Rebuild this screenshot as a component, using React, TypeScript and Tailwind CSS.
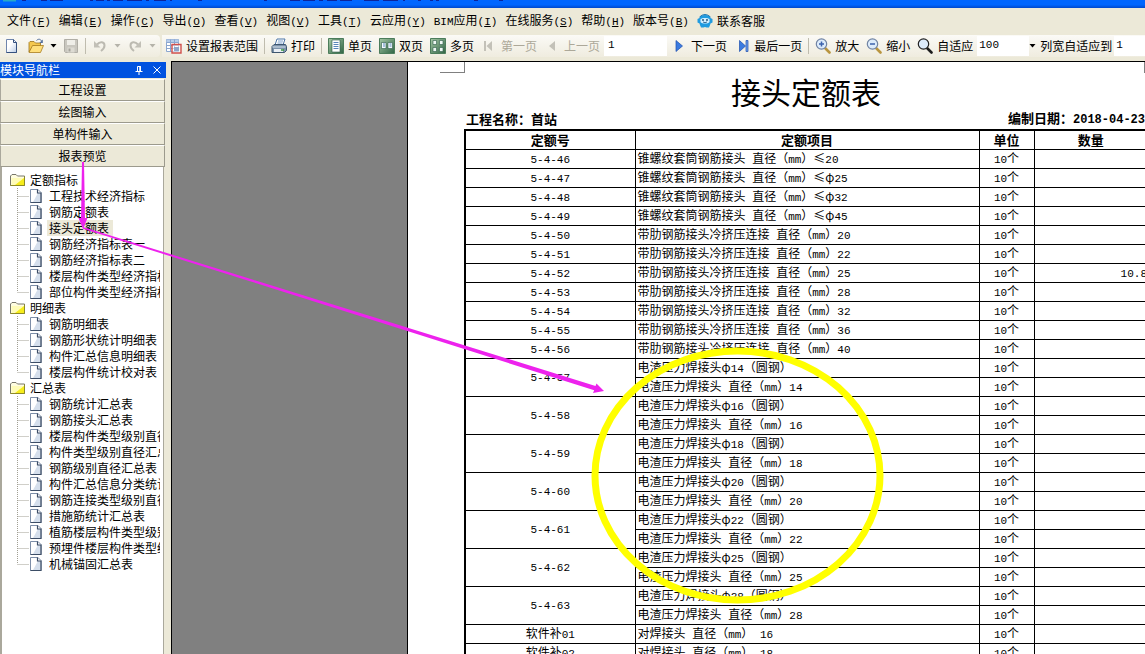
import type { ReactNode } from 'react'
import clsx from 'clsx'

// latin runs are set in a narrower mono face than the Chinese around them
function Txt({ children, bold }: { children: string; bold?: boolean }) {
  return (
    <>
      {children.split(/([\x20-\x7e]+)/).map((part, i) =>
        i % 2 ? (
          <span key={i} className={clsx("font-['Liberation_Mono',monospace]", bold ? 'text-[12px]' : 'text-[11px]')}>
            {part}
          </span>
        ) : (
          part
        ),
      )}
    </>
  )
}

const menus: [string, string][] = [
  ['文件', 'F'], ['编辑', 'E'], ['操作', 'C'], ['导出', 'O'], ['查看', 'V'], ['视图', 'V'], ['工具', 'T'],
  ['云应用', 'Y'], ['BIM应用', 'I'], ['在线服务', 'S'], ['帮助', 'H'], ['版本号', 'B'],
]

const modules = ['工程设置', '绘图输入', '单构件输入', '报表预览']

const tree = [
  {
    name: '定额指标',
    items: ['工程技术经济指标', '钢筋定额表', '接头定额表', '钢筋经济指标表一', '钢筋经济指标表二', '楼层构件类型经济指标表', '部位构件类型经济指标表'],
  },
  { name: '明细表', items: ['钢筋明细表', '钢筋形状统计明细表', '构件汇总信息明细表', '楼层构件统计校对表'] },
  {
    name: '汇总表',
    items: [
      '钢筋统计汇总表', '钢筋接头汇总表', '楼层构件类型级别直径汇总表', '构件类型级别直径汇总表', '钢筋级别直径汇总表',
      '构件汇总信息分类统计表', '钢筋连接类型级别直径汇总表', '措施筋统计汇总表', '植筋楼层构件类型级别直径汇总表',
      '预埋件楼层构件类型统计表', '机械锚固汇总表',
    ],
  },
]

type Quota = { code: string; items: string[]; amount?: string }

const quotas: Quota[] = [
  { code: '5-4-46', items: ['锥螺纹套筒钢筋接头 直径（mm）≤20'] },
  { code: '5-4-47', items: ['锥螺纹套筒钢筋接头 直径（mm）≤φ25'] },
  { code: '5-4-48', items: ['锥螺纹套筒钢筋接头 直径（mm）≤φ32'] },
  { code: '5-4-49', items: ['锥螺纹套筒钢筋接头 直径（mm）≤φ45'] },
  { code: '5-4-50', items: ['带肋钢筋接头冷挤压连接 直径（mm）20'] },
  { code: '5-4-51', items: ['带肋钢筋接头冷挤压连接 直径（mm）22'] },
  { code: '5-4-52', items: ['带肋钢筋接头冷挤压连接 直径（mm）25'], amount: '10.8' },
  { code: '5-4-53', items: ['带肋钢筋接头冷挤压连接 直径（mm）28'] },
  { code: '5-4-54', items: ['带肋钢筋接头冷挤压连接 直径（mm）32'] },
  { code: '5-4-55', items: ['带肋钢筋接头冷挤压连接 直径（mm）36'] },
  { code: '5-4-56', items: ['带肋钢筋接头冷挤压连接 直径（mm）40'] },
  { code: '5-4-57', items: ['电渣压力焊接头φ14（圆钢）', '电渣压力焊接头 直径（mm）14'] },
  { code: '5-4-58', items: ['电渣压力焊接头φ16（圆钢）', '电渣压力焊接头 直径（mm）16'] },
  { code: '5-4-59', items: ['电渣压力焊接头φ18（圆钢）', '电渣压力焊接头 直径（mm）18'] },
  { code: '5-4-60', items: ['电渣压力焊接头φ20（圆钢）', '电渣压力焊接头 直径（mm）20'] },
  { code: '5-4-61', items: ['电渣压力焊接头φ22（圆钢）', '电渣压力焊接头 直径（mm）22'] },
  { code: '5-4-62', items: ['电渣压力焊接头φ25（圆钢）', '电渣压力焊接头 直径（mm）25'] },
  { code: '5-4-63', items: ['电渣压力焊接头φ28（圆钢）', '电渣压力焊接头 直径（mm）28'] },
  { code: '软件补01', items: ['对焊接头 直径（mm） 16'] },
  { code: '软件补02', items: ['对焊接头 直径（mm） 18'] },
]

function Icon({ children }: { children: ReactNode }) {
  return (
    <svg viewBox="0 0 16 16" className="w-4 h-4 shrink-0" aria-hidden="true">
      {children}
    </svg>
  )
}

const NewIcon = () => (
  <Icon>
    <defs>
      <linearGradient id="sheet" x1="0" y1="0" x2="1" y2="1">
        <stop offset="0.4" stopColor="#fff" />
        <stop offset="1" stopColor="#b9cbe6" />
      </linearGradient>
    </defs>
    <path d="M2.500 1.500h7l3 3v10h-10z" fill="url(#sheet)" stroke="#6f85ad" />
    <path d="M9.500 1.500v3h3M12.500 4.500v10h-10" fill="none" stroke="#34507f" />
  </Icon>
)

const OpenIcon = () => (
  <Icon>
    <path d="M1 14V4.500L2 3.500h4l1.500 1.500h5V8H5z" fill="#f5c84e" stroke="#9a7420" strokeWidth=".8" />
    <path d="M1 14.500L4.500 7.500H15.500L12.500 14.500z" fill="#ffdf7b" stroke="#a87c1e" strokeWidth=".8" />
    <path d="M8.500 2.500c2-2 4-1.500 5 .5" fill="none" stroke="#54709c" />
    <path d="M14.800 1.500v3.500h-3.500z" fill="#54709c" />
  </Icon>
)

const SaveIcon = () => (
  <Icon>
    <path d="M1.500 1.500h13v13h-12l-1-1z" fill="#c9c7bf" stroke="#b0aea6" />
    <path d="M4 2h8v5H4z" fill="#efeee8" />
    <path d="M4.500 9.500h7v5h-7z" fill="#dddbd3" />
    <path d="M5.500 10.500h2v3h-2z" fill="#a5a39b" />
  </Icon>
)

const UndoIcon = ({ flip }: { flip?: boolean }) => (
  <Icon>
    <g transform={flip ? 'translate(16 0) scale(-1 1)' : undefined}>
      <path d="M5 6.500C8 3 12.500 3.500 12.500 7.500c0 2.500-1.500 4-3.500 5.500" fill="none" stroke="#bcbab1" strokeWidth="2" />
      <path d="M2 3v6.500h6.500z" fill="#c2c0b7" />
    </g>
  </Icon>
)

const RangeIcon = () => (
  <Icon>
    <path d="M.5 1.500h12v12H.5z" fill="#fff" stroke="#8ba6cf" />
    <path d="M.5 1.500h12v3H.5z" fill="#b7cdea" />
    <path d="M.5 4.500h12M.5 7.500h12M.5 10.500h12M4.500 1.500v12M8.500 1.500v12" stroke="#8ba6cf" />
    <path d="M6 6.500h9v8.500H6z" fill="#fff" fillOpacity=".5" stroke="#d0504c" strokeWidth="1.400" />
    <path d="M8 9h5v4H8z" fill="#8ea5c9" />
  </Icon>
)

const PrintIcon = () => (
  <Icon>
    <path d="M4 7l2-6h8l-2 6z" fill="#fff" stroke="#4d76a8" />
    <path d="M7 3h5M6.500 5h5" stroke="#7da0cc" />
    <path d="M1 8.500L3 6.500h11.500l1 2v4l-2 2H1z" fill="#7d93ab" stroke="#3e566f" />
    <path d="M1.500 9h13" stroke="#dce6f0" />
    <path d="M3 11h9v3H3z" fill="#e9eef4" />
    <path d="M10 12h3" stroke="#3a9a3a" strokeWidth="1.500" />
  </Icon>
)

const GreenBox = ({ children }: { children: ReactNode }) => (
  <Icon>
    <defs>
      <linearGradient id="green" x1="0" y1="0" x2="1" y2="1">
        <stop offset="0" stopColor="#a5c8a6" />
        <stop offset="1" stopColor="#2f6444" />
      </linearGradient>
    </defs>
    <path d="M.5.5h15v15H.5z" fill="url(#green)" stroke="#4c7d5b" />
    {children}
  </Icon>
)

const SinglePageIcon = () => (
  <GreenBox>
    <path d="M4 2h8v12H4z" fill="#fff" stroke="#2e5d48" strokeWidth=".6" />
    <path d="M5.500 4.500h5M5.500 6.500h5M5.500 8.500h5M5.500 10.500h5" stroke="#5a86bb" />
  </GreenBox>
)

const DoublePageIcon = () => (
  <GreenBox>
    <path d="M2.500 4.500h4.500v6H2.500zM9 4.500h4.500v6H9z" fill="#f4faff" stroke="#2e5d48" strokeWidth=".6" />
    <path d="M4 6h2M4 8h2M10.500 6h2M10.500 8h2" stroke="#5a86bb" />
  </GreenBox>
)

const MultiPageIcon = () => (
  <GreenBox>
    <path d="M3 2.500h3.500v4H3zM9.500 2.500H13v4H9.500zM3 9.500h3.500v4H3zM9.500 9.500H13v4H9.500z" fill="#eef8f4" stroke="#2e5d48" strokeWidth=".6" />
  </GreenBox>
)

const FirstIcon = () => (
  <Icon>
    <path d="M3 3h2v10H3zM11 3v10L5.500 8z" fill="#c3c1b8" />
  </Icon>
)

const PrevIcon = () => (
  <Icon>
    <path d="M11 3v10L5 8z" fill="#c3c1b8" />
  </Icon>
)

const NextIcon = () => (
  <Icon>
    <path d="M5 2.500v11L11.500 8z" fill="#3b7be0" stroke="#1d4fae" strokeWidth=".7" />
  </Icon>
)

const LastIcon = () => (
  <Icon>
    <path d="M5.500 2.500v11L11.500 8z" fill="#3b7be0" stroke="#1d4fae" strokeWidth=".7" />
    <path d="M12 2.500h2v11h-2z" fill="#6fa0ee" stroke="#1d4fae" strokeWidth=".7" />
  </Icon>
)

const Lens = ({ dark, children }: { dark?: boolean; children?: ReactNode }) => (
  <Icon>
    <path d="M10 10l4.500 4.500" stroke={dark ? '#1c1c1c' : '#b9953f'} strokeWidth="2.600" strokeLinecap="round" />
    <circle cx="6.500" cy="6" r="5.200" fill="#dcebfb" stroke={dark ? '#222' : '#7184a3'} strokeWidth="1.200" />
    {children}
  </Icon>
)

const ServiceIcon = () => (
  <Icon>
    <path d="M2.500 5C3 1 13 1 13.500 5l2 1v3.500L13.500 10.500c-.5 2-1 2.500-1.500 4H9.500L8 14l-1.500.5H4c-.5-1.500-1-2-1.500-4L.5 9.500V6z" fill="#1f9be0" />
    <path d="M3.500 6c1.500-1.500 7.500-1.500 9 0v3c-1.500 2-7.500 2-9 0z" fill="#d3efff" />
    <circle cx="6" cy="7" r=".9" fill="#124b78" />
    <circle cx="10" cy="7" r=".9" fill="#124b78" />
    <path d="M6 9q2 1.300 4 0" fill="none" stroke="#124b78" strokeWidth=".8" />
    <path d="M2.500 4Q8-1 13.500 4" fill="none" stroke="#1673b5" />
  </Icon>
)

const FolderIcon = () => (
  <Icon>
    <path d="M.5 13.500V4l1.500-1.500h4L7.500 4h7v9.500z" fill="#fffde0" stroke="#77766a" />
    <path d="M1.500 13V6h12.500v7z" fill="#fffcb8" />
    <path d="M5 13l9-7v7z" fill="#f6ec1c" />
    <path d="M.5 13.500h14V4.500" fill="none" stroke="#8f8a26" />
  </Icon>
)

const FileIcon = () => (
  <svg viewBox="0 0 12 16" className="w-3 h-4 shrink-0" aria-hidden="true">
    <path d="M.5 1.500h7.500l3 3v10H.5z" fill="#fff" stroke="#7d8ea8" />
    <path d="M8 5h2.500v9H3z" fill="#d5dfec" />
    <path d="M7.500 1.500v3.500H11v9.500H.5" fill="none" stroke="#3c4d66" strokeWidth="1.200" />
  </svg>
)

function Caret({ disabled }: { disabled?: boolean }) {
  return (
    <svg viewBox="0 0 7 4" className="w-[7px] h-1 shrink-0" aria-hidden="true">
      <path d="M.5 0h6l-3 3.500z" fill={disabled ? '#b5b3aa' : '#000'} />
    </svg>
  )
}

function Tool({ icon, label, disabled }: { icon: ReactNode; label: string; disabled?: boolean }) {
  return (
    <button type="button" disabled={disabled} className="flex items-center gap-1 shrink-0 disabled:text-[#aca899]">
      {icon}
      {label}
    </button>
  )
}

const Sep = () => <div className="w-px h-4 mx-1.5 shrink-0 bg-[#bfbcae]" />

function TitleBar() {
  return (
    <header className="h-2 shrink-0 bg-gradient-to-b from-[#0066ff] from-60% to-[#0048cc]">
      <svg className="block h-2 w-[520px]" aria-hidden="true">
        <path d="M3 0h13v1.500H3z" fill="#27a9c9" />
        <path
          d="M22 .5h4M41 .5h6M50 .5h13M90 .5h3M96 .5h8M107 .5h3M113 .5h10M127 .5h15M146 .5h3M154 .5h12M170 .5h2M198 .5h4M264 .5h3M290 .5h10M303 .5h12M319 .5h4M327 .5h10M340 .5h12M364 .5h15M383 .5h15M403 .5h2M418 .5h3M430 .5h3M436 .5h3M474 .5h4M499 .5h4"
          stroke="#0b249c"
          strokeWidth="1"
        />
      </svg>
    </header>
  )
}

function MenuBar() {
  return (
    <nav className="flex items-center gap-2 h-[27px] pl-[7px] pb-0.5 shrink-0 whitespace-nowrap">
      {menus.map(([name, key]) => (
        <button type="button" key={name}>
          <Txt>{name}</Txt>
          <span className="font-['Liberation_Mono',monospace] text-[11px]">
            (<u>{key}</u>)
          </span>
        </button>
      ))}
      <Tool icon={<ServiceIcon />} label="联系客服" />
    </nav>
  )
}

function Toolbar() {
  return (
    <div className="flex h-[22px] shrink-0 gap-0.5 whitespace-nowrap">
      <div className="flex items-center w-40 shrink-0 pl-1 rounded-r-sm bg-gradient-to-b from-[#fbfaf6] to-[#efecdf]">
        <button type="button" aria-label="新建"><NewIcon /></button>
        <button type="button" aria-label="打开" className="flex items-center gap-1.5 ml-2"><OpenIcon /><Caret /></button>
        <button type="button" aria-label="保存" disabled className="ml-1.5"><SaveIcon /></button>
        <Sep />
        <button type="button" aria-label="撤销" disabled className="flex items-center gap-1.5"><UndoIcon /><Caret disabled /></button>
        <button type="button" aria-label="恢复" disabled className="flex items-center gap-1.5 ml-1.5"><UndoIcon flip /><Caret disabled /></button>
      </div>

      <div className="flex items-center flex-1 min-w-0 pl-1 bg-gradient-to-b from-[#fbfaf6] to-[#efecdf]">
        <Tool icon={<RangeIcon />} label="设置报表范围" />
        <Sep />
        <Tool icon={<PrintIcon />} label="打印" />
        <Sep />
        <div className="flex items-center gap-[7px] shrink-0">
          <Tool icon={<SinglePageIcon />} label="单页" />
          <Tool icon={<DoublePageIcon />} label="双页" />
          <Tool icon={<MultiPageIcon />} label="多页" />
          <Tool icon={<FirstIcon />} label="第一页" disabled />
          <div className="flex items-center gap-1">
            <Tool icon={<PrevIcon />} label="上一页" disabled />
            <input
              aria-label="页码"
              defaultValue="1"
              className="w-[63px] h-5 px-1 pb-0.5 bg-white font-['Liberation_Mono',monospace] text-[11px]"
            />
            <Tool icon={<NextIcon />} label="下一页" />
          </div>
          <Tool icon={<LastIcon />} label="最后一页" />
        </div>
        <Sep />
        <div className="flex items-center gap-[7px] shrink-0">
          <Tool icon={<Lens><path d="M4 6h5M6.500 3.500v5" stroke="#3b62ad" strokeWidth="1.500" /></Lens>} label="放大" />
          <Tool icon={<Lens><path d="M4 6h5" stroke="#3b62ad" strokeWidth="1.500" /></Lens>} label="缩小" />
          <Tool icon={<Lens dark />} label="自适应" />
        </div>
        <div className="flex items-center ml-1 mr-1 shrink-0">
          <select
            aria-label="显示比例"
            className="appearance-none w-[52px] h-5 pl-0.5 pb-0.5 bg-white font-['Liberation_Mono',monospace] text-[11px]"
          >
            <option>100</option>
          </select>
          <Caret />
        </div>
        <label htmlFor="fit-columns" className="shrink-0">列宽自适应到</label>
        <input
          id="fit-columns"
          defaultValue="1"
          className="flex-1 min-w-0 h-5 ml-0.5 px-0.5 pb-0.5 bg-white font-['Liberation_Mono',monospace] text-[11px]"
        />
      </div>
    </div>
  )
}

function Sidebar() {
  return (
    <aside className="flex flex-col w-[166px] shrink-0 whitespace-nowrap">
      <div className="flex items-center h-4 mt-px bg-[#0052e0] text-white">
        <h2 className="flex-1">模块导航栏</h2>
        <button type="button" aria-label="固定" className="mr-2">
          <svg viewBox="0 0 10 10" className="w-2.5 h-2.5" aria-hidden="true">
            <path d="M3.500 6V1.500h3V6M1.500 6.500h7M5 6.500V10" fill="none" stroke="#fff" />
            <path d="M6 1v5" stroke="#fff" strokeWidth="1.500" />
          </svg>
        </button>
        <button type="button" aria-label="关闭" className="mr-1">
          <svg viewBox="0 0 10 10" className="w-2.5 h-2.5" aria-hidden="true">
            <path d="M1.500 1.500l7 7M8.500 1.500l-7 7" stroke="#fff" />
          </svg>
        </button>
      </div>

      <div className="flex flex-col pt-px pr-px">
        {modules.map((name) => (
          <button
            type="button"
            key={name}
            className="h-[22px] border-t border-l border-b border-r border-t-white border-l-[#aaa89c] border-b-[#9c9a8d] border-r-[#9c9a8d]"
          >
            {name}
          </button>
        ))}
      </div>

      <div className="flex-1 min-h-0 overflow-hidden mr-0.5 pt-[5px] pl-2 pr-[3px] bg-white border-l-2 border-r border-[#aaa89c]">
        {tree.map((group) => (
          <section key={group.name}>
            <button type="button" className="flex items-center gap-1 h-4">
              <FolderIcon />
              {group.name}
            </button>
            <ul>
              {group.items.map((item, i) => (
                <li key={item} className="flex items-center h-4 pl-[7px] overflow-hidden">
                  <svg viewBox="0 0 13 16" className="w-[13px] h-4 shrink-0" aria-hidden="true">
                    <path
                      d={i === group.items.length - 1 ? 'M.5 0v8M.5 8.500h11' : 'M.5 0v16M.5 8.500h11'}
                      fill="none"
                      stroke="#a09e92"
                      strokeDasharray="1 1"
                    />
                  </svg>
                  <FileIcon />
                  <button
                    type="button"
                    className={clsx('h-4 ml-[5px] pl-0.5 pr-1 leading-4', item === '接头定额表' && 'bg-[#ece9d8]')}
                  >
                    {item}
                  </button>
                </li>
              ))}
            </ul>
          </section>
        ))}
      </div>
    </aside>
  )
}

function Report() {
  return (
    <article className="w-[800px] shrink-0 bg-white border-l border-black">
      <div className="flex h-[11px]">
        <div className="w-[25px] ml-8 border-b border-r border-[#808080]" />
        <div className="w-[25px] ml-[679px] border-b border-l border-[#808080]" />
      </div>
      <div className="w-[684px] ml-14">
        <h1 className="text-[30px] leading-9 text-center">接头定额表</h1>
        <div className="flex items-center justify-between h-5 pl-0.5 pr-[3px] font-bold text-[13px]">
          <span>工程名称：首站</span>
          <span><Txt bold>编制日期：2018-04-23</Txt></span>
        </div>
        <table className="w-full table-fixed border-collapse border-t-2 border-l-2 border-black leading-4">
          <colgroup>
            <col className="w-[170px]" />
            <col className="w-[344px]" />
            <col className="w-[55px]" />
            <col />
          </colgroup>
          <thead>
            <tr className="text-[13px]">
              {['定额号', '定额项目', '单位', '数量'].map((h) => (
                <th key={h} className="h-[19px] p-0 border border-black border-t-2">{h}</th>
              ))}
            </tr>
          </thead>
          <tbody>
            {quotas.flatMap(({ code, items, amount }) =>
              items.map((item, i) => (
                <tr key={item} className="h-[19px] text-center">
                  {i === 0 && (
                    <td rowSpan={items.length} className="p-0 border border-black"><Txt>{code}</Txt></td>
                  )}
                  <td className="p-0 pl-0.5 border border-black text-left"><Txt>{item}</Txt></td>
                  <td className="p-0 border border-black"><Txt>10个</Txt></td>
                  <td className="p-0 border border-black text-right">{amount && <Txt>{amount}</Txt>}</td>
                </tr>
              )),
            )}
          </tbody>
        </table>
      </div>
    </article>
  )
}

// freehand marks laid over the window
function Annotations() {
  return (
    <svg className="absolute top-0 left-0 w-[1145px] h-[654px] pointer-events-none" aria-hidden="true">
      <ellipse cx="737.500" cy="475.500" rx="142.500" ry="124.500" fill="none" stroke="#ffff00" strokeWidth="7" />
      <g fill="#ed22ed">
        <path d="M82 162h2l1 56h2.500l-4.500 11-4.500-11h2.500z" />
        <path d="M83 227L250 278.800 595.500 386l1-2.500 7.500 7.500-11 2 1.200-2.800L250 281.200 83 228.800z" />
      </g>
    </svg>
  )
}

export default function App() {
  return (
    <div className="relative flex flex-col h-screen overflow-hidden bg-[#ece9d8] text-black text-[12px] leading-4 font-['Noto_Sans_CJK_SC',sans-serif]">
      <TitleBar />
      <MenuBar />
      <Toolbar />
      <div className="flex flex-1 min-h-0 gap-[5px] pt-1">
        <Sidebar />
        <main className="flex flex-1 min-w-0 overflow-hidden pl-[235px] bg-[#808080] border-t border-l border-black">
          <Report />
        </main>
      </div>
      <Annotations />
    </div>
  )
}
